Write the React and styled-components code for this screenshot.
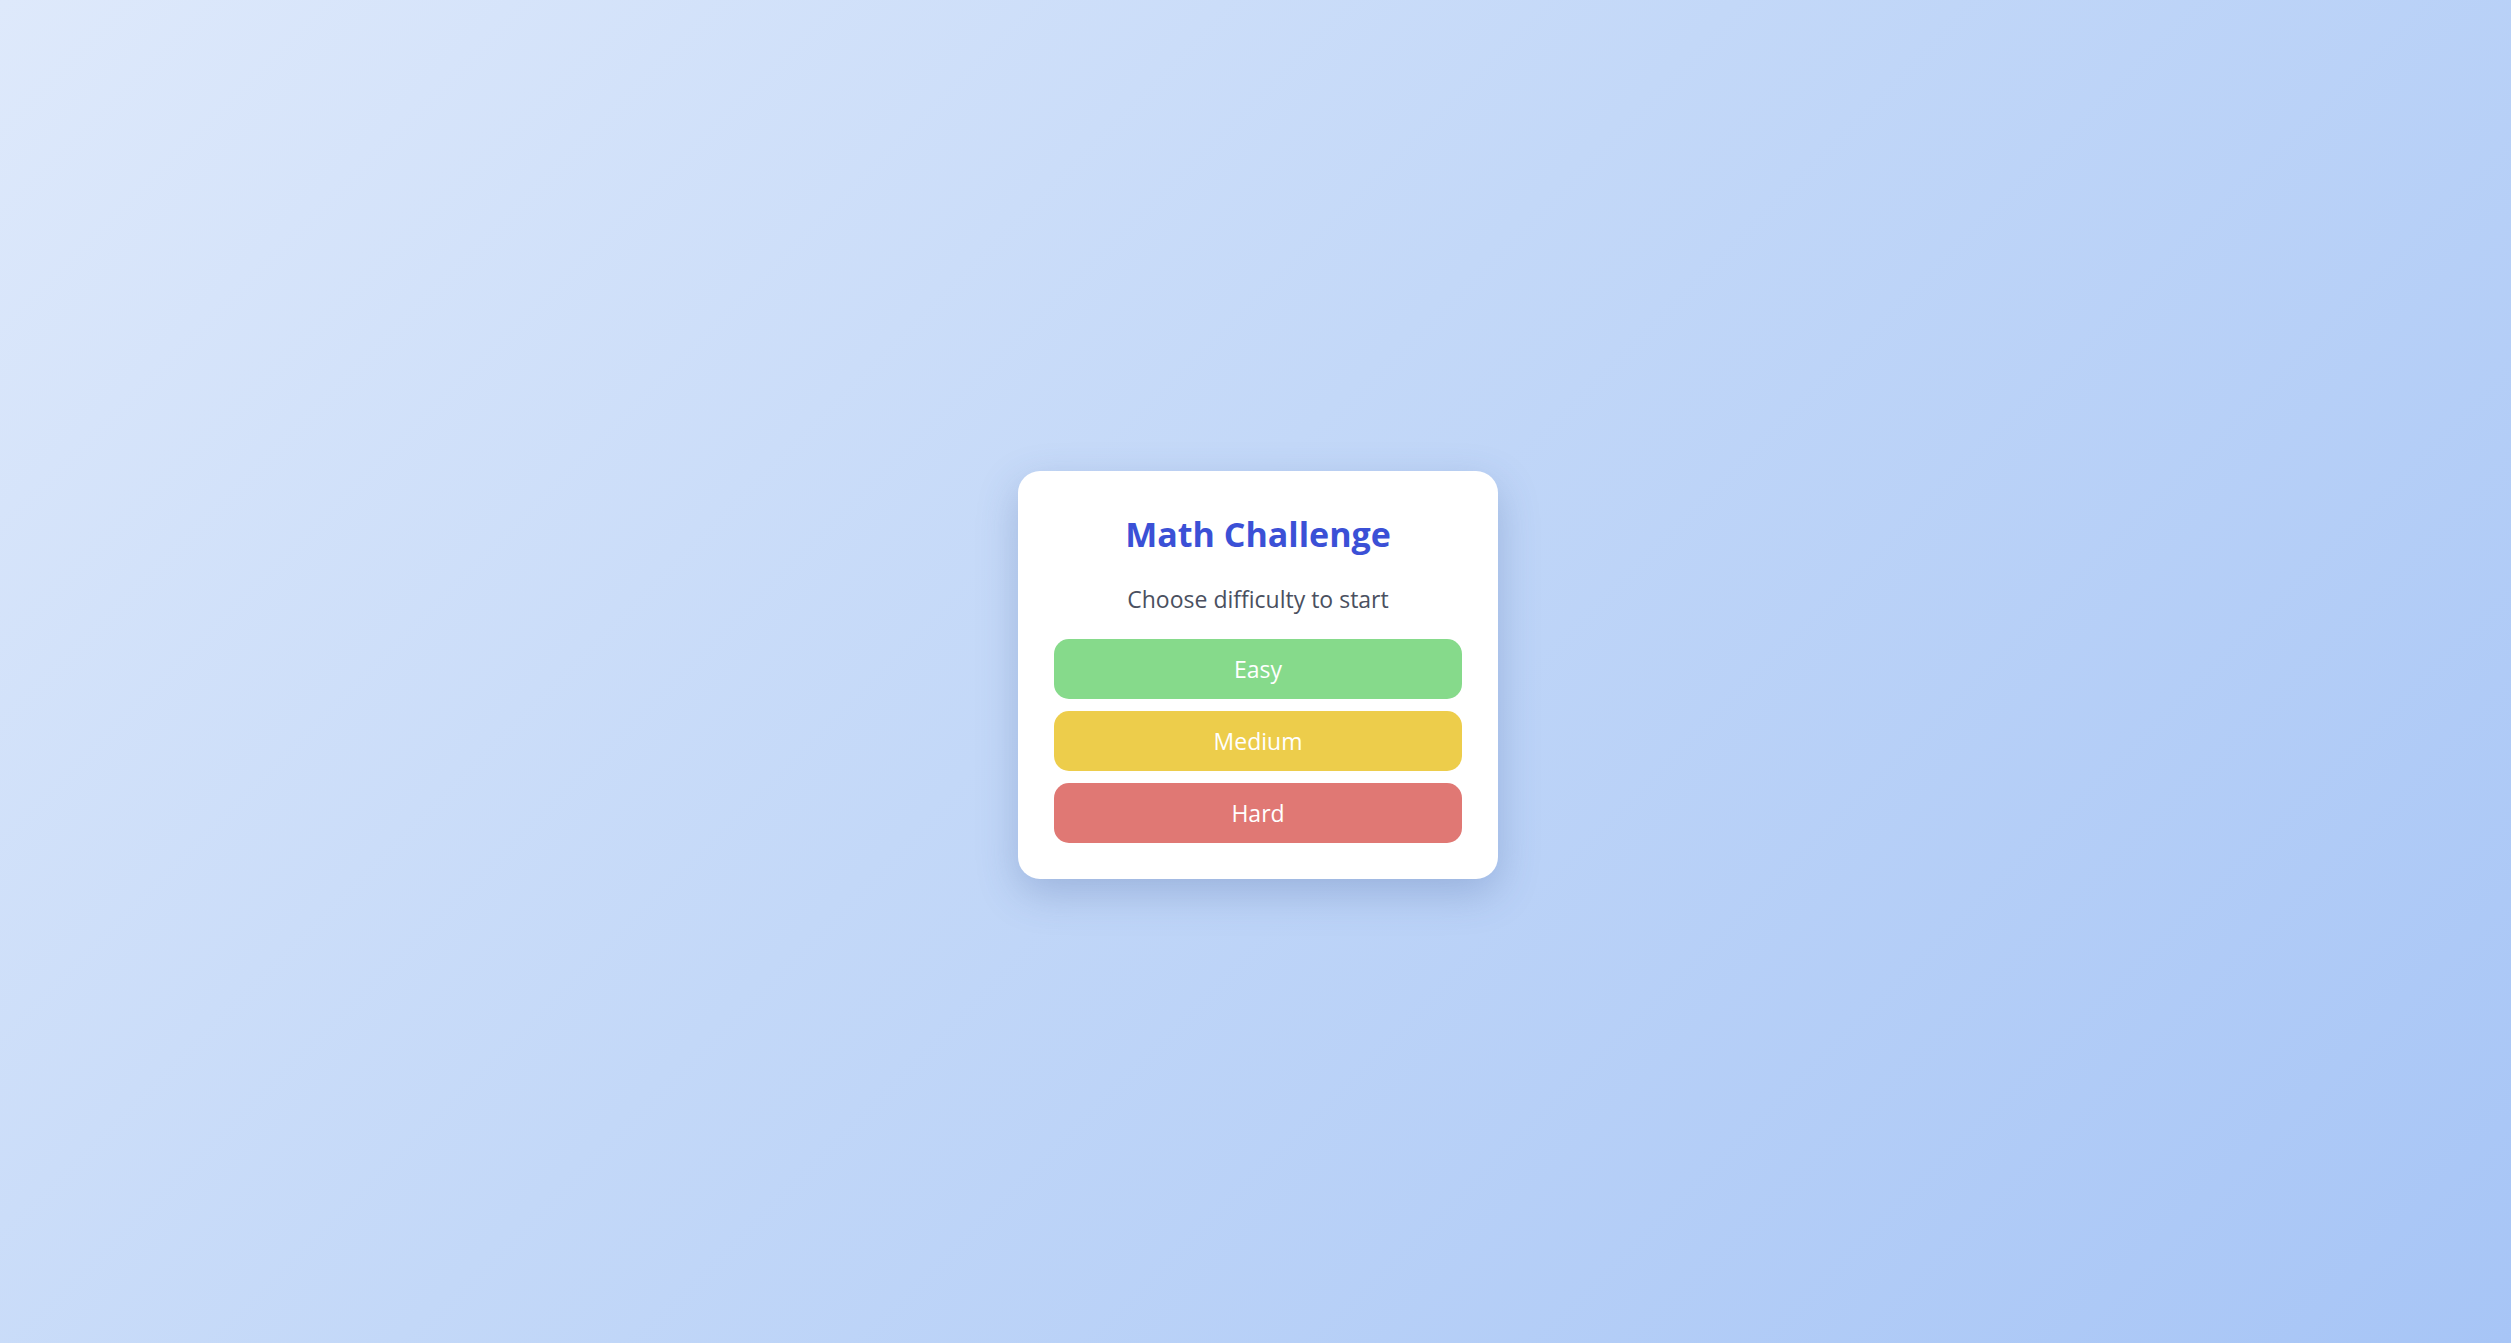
import React from 'react';
import styled, { createGlobalStyle } from 'styled-components';

const GlobalStyle = createGlobalStyle`
  html, body {
    margin: 0;
    padding: 0;
  }
  body {
    font-family: "Open Sans", "Noto Sans", Arial, sans-serif;
  }
`;

const levels = [
  { name: 'Easy', color: '#86da8b' },
  { name: 'Medium', color: '#edcd4b' },
  { name: 'Hard', color: '#e07874' }
];

const App = function () {
  return (
    <Page>
      <GlobalStyle />
      <Card>
        <Title>Math Challenge</Title>
        <Subtitle>Choose difficulty to start</Subtitle>
        <Level_List>
          {levels.map((level) => (
            <Level_Button key={level.name} $color={level.color}>
              {level.name}
            </Level_Button>
          ))}
        </Level_List>
      </Card>
    </Page>
  );
};

export default App;

const Page = styled.div`
  align-items: center;
  background: linear-gradient(135deg, #dee9fb 0%, #c3d8f8 45%, #a7c5f6 100%);
  box-sizing: border-box;
  display: flex;
  height: 100vh;
  justify-content: center;
  padding: 7px 0 0 5px;
  width: 100vw;
`;

const Card = styled.div`
  background: #ffffff;
  border-radius: 22px;
  box-shadow: 0 14px 40px rgba(60, 90, 150, 0.28);
  box-sizing: border-box;
  display: flex;
  flex-direction: column;
  padding: 36px;
  width: 480px;
`;

const Title = styled.h1`
  color: #3b50d6;
  font-size: 34px;
  font-weight: 700;
  line-height: 44px;
  margin: 5px 0 0 0;
  text-align: center;
`;

const Subtitle = styled.p`
  color: #4a5060;
  font-size: 23px;
  line-height: 32px;
  margin: 27px 0 0 0;
  text-align: center;
`;

const Level_List = styled.div`
  display: flex;
  flex-direction: column;
  gap: 12px;
  margin-top: 24px;
`;

const Level_Button = styled.button`
  background: ${(props) => props.$color};
  border: none;
  border-radius: 15px;
  color: #ffffff;
  cursor: pointer;
  font-family: inherit;
  font-size: 23px;
  height: 60px;
  padding: 0;
  width: 100%;
`;
